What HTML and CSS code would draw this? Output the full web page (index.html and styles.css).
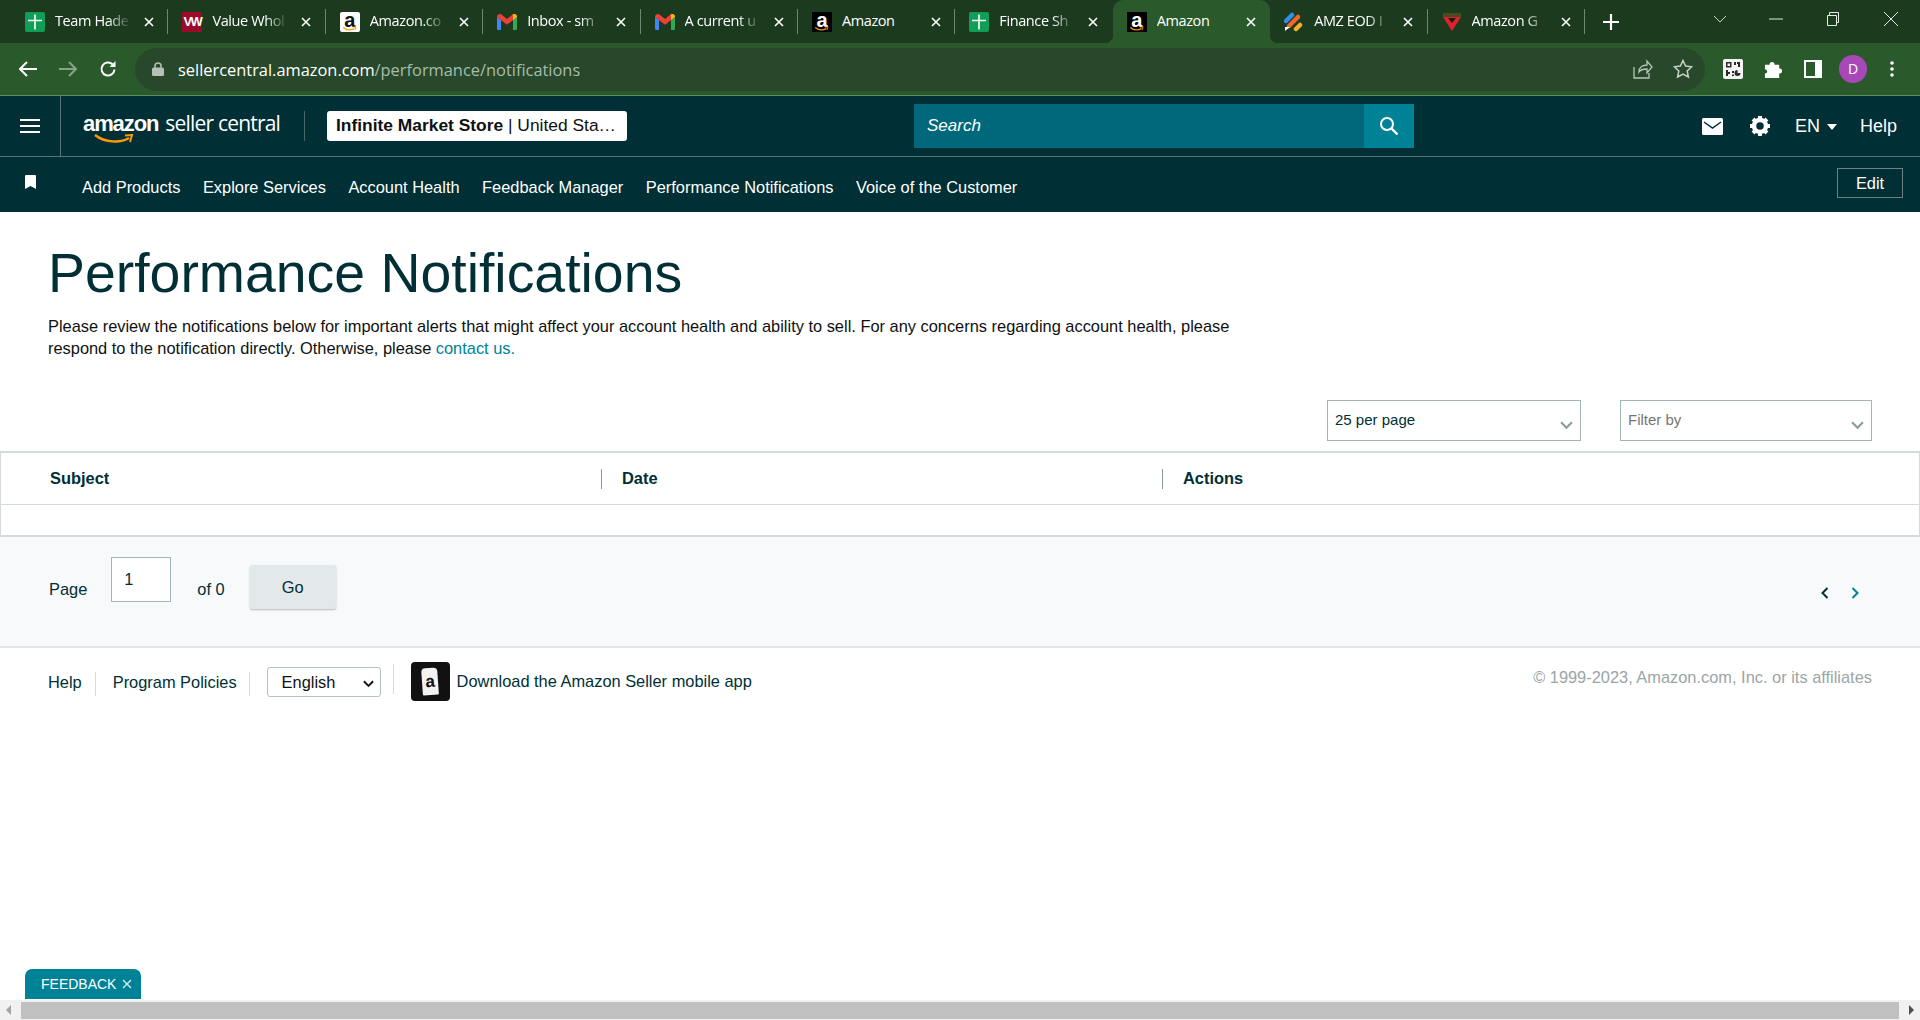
FILE: index.html
```html
<!DOCTYPE html>
<html lang="en">
<head>
    <meta charset="UTF-8">
    <title>Performance Notifications</title>
    <link rel="stylesheet" href="styles.css">
</head>
<body>
    <svg class="defs" width="0" height="0">
        <symbol id="fav-sheets" viewBox="0 0 20 20">
            <rect width="20" height="20" rx="2" fill="#0f9d58"/>
            <path d="M9.200 2.500h1.600v5.300H17v1.500h-6.200v8.200H9.200V9.300H3V7.800h6.200z" fill="#fff"/>
        </symbol>
        <symbol id="fav-gmail" viewBox="0 0 20 16">
            <path d="M0 3v11.500A1.500 1.500 0 0 0 1.500 16H4V6z" fill="#4285f4"/>
            <path d="M16 6v10h2.500A1.500 1.500 0 0 0 20 14.500V3z" fill="#34a853"/>
            <path d="M0 3l4 3 6 4.500L16 6l4-3C20 .5 17.500-.8 15.500.6L10 5 4.500.6C2.500-.8 0 .5 0 3z" fill="#ea4335"/>
            <path d="M16 6V1l-6 4.500L4 1v5l6 4.500z" fill="#ea4335"/>
            <path d="M16 1.400l0 4.600 4-3C20 .5 17.500-.8 15.500.6z" fill="#fbbc04"/>
        </symbol>
        <symbol id="close-x" viewBox="0 0 10 10">
            <path d="M1 1l8 8M9 1l-8 8" stroke="#fff" stroke-width="1.600" fill="none"/>
        </symbol>
        <symbol id="smile" viewBox="0 0 20 8">
            <path d="M1 2c4 3.500 10 4 15 1.500" stroke="#f90" stroke-width="1.600" fill="none"/>
            <path d="M14 1.500l4-.5-1 4" stroke="#f90" stroke-width="1.200" fill="none"/>
        </symbol>
    </svg>

    <div class="tabstrip">
        <div class="tab">
            <svg class="fav"><use href="#fav-sheets"/></svg>
            <span class="tab-title">Team Hade</span>
            <svg class="tab-close"><use href="#close-x"/></svg>
        </div>
        <div class="tab">
            <span class="fav fav-vw">VW</span>
            <span class="tab-title">Value Whol</span>
            <svg class="tab-close"><use href="#close-x"/></svg>
        </div>
        <div class="tab">
            <span class="fav fav-a fav-a-white">a<svg class="fav-smile"><use href="#smile"/></svg></span>
            <span class="tab-title">Amazon.co</span>
            <svg class="tab-close"><use href="#close-x"/></svg>
        </div>
        <div class="tab">
            <svg class="fav fav-m"><use href="#fav-gmail"/></svg>
            <span class="tab-title">Inbox - sm</span>
            <svg class="tab-close"><use href="#close-x"/></svg>
        </div>
        <div class="tab">
            <svg class="fav fav-m"><use href="#fav-gmail"/></svg>
            <span class="tab-title">A current u</span>
            <svg class="tab-close"><use href="#close-x"/></svg>
        </div>
        <div class="tab">
            <span class="fav fav-a">a<svg class="fav-smile"><use href="#smile"/></svg></span>
            <span class="tab-title tab-title-full">Amazon</span>
            <svg class="tab-close"><use href="#close-x"/></svg>
        </div>
        <div class="tab tab-before-active">
            <svg class="fav"><use href="#fav-sheets"/></svg>
            <span class="tab-title">Finance Sh</span>
            <svg class="tab-close"><use href="#close-x"/></svg>
        </div>
        <div class="tab tab-active">
            <span class="fav fav-a">a<svg class="fav-smile"><use href="#smile"/></svg></span>
            <span class="tab-title tab-title-full">Amazon</span>
            <svg class="tab-close"><use href="#close-x"/></svg>
        </div>
        <div class="tab">
            <svg class="fav" viewBox="0 0 20 20">
                <path d="M2 9l6-6" stroke="#2f8fef" stroke-width="4.500" stroke-linecap="round"/>
                <path d="M5 14l9-9" stroke="#f4672a" stroke-width="4.500" stroke-linecap="round"/>
                <path d="M12 17l4-4" stroke="#fbb02d" stroke-width="4.500" stroke-linecap="round"/>
                <path d="M1 15h5l-5 4z" fill="#fff"/>
            </svg>
            <span class="tab-title">AMZ EOD I</span>
            <svg class="tab-close"><use href="#close-x"/></svg>
        </div>
        <div class="tab">
            <svg class="fav" viewBox="0 0 20 20">
                <rect x="1" y="1" width="18" height="4" fill="#4a4a20"/>
                <path d="M1 5h18l-9 14z" fill="#e0202c"/>
                <path d="M6 6h8l-4 5z" fill="#1a1a1a"/>
            </svg>
            <span class="tab-title">Amazon G</span>
            <svg class="tab-close"><use href="#close-x"/></svg>
        </div>
        <svg class="new-tab" viewBox="0 0 16 16"><path d="M8 0v16M0 8h16" stroke="#fff" stroke-width="2.200"/></svg>
        <div class="window-btns">
            <svg class="win-chevron" viewBox="0 0 14 8"><path d="M1 1l6 6 6-6" stroke="#c9d4ca" fill="none"/></svg>
            <svg class="win-min" viewBox="0 0 14 2"><path d="M0 1h14" stroke="#e4ebe4"/></svg>
            <svg class="win-max" viewBox="0 0 14 16"><path d="M1.500 4.500h9v10h-9zM3.500 4.500v-3h9v10h-2" stroke="#e4ebe4" fill="none"/></svg>
            <svg class="win-close" viewBox="0 0 14 14"><path d="M0 0l14 14M14 0L0 14" stroke="#e4ebe4"/></svg>
        </div>
    </div>

    <div class="toolbar">
        <svg class="tool-icon" viewBox="0 0 18 16"><path d="M8 1L1 8l7 7M1 8h17" stroke="#fff" stroke-width="2" fill="none"/></svg>
        <svg class="tool-icon tool-off" viewBox="0 0 18 16"><path d="M10 1l7 7-7 7M17 8H0" stroke="#85a487" stroke-width="2" fill="none"/></svg>
        <svg class="tool-icon tool-reload" viewBox="0 0 18 18"><path d="M15.500 9.500a6.500 6.500 0 1 1-2-5.200" stroke="#fff" stroke-width="2" fill="none"/><path d="M16.500 1v6h-6z" fill="#fff"/></svg>
        <div class="omnibox">
            <svg class="lock" viewBox="0 0 12 14"><path d="M3 6V4a3 3 0 0 1 6 0v2" stroke="#b6c0b7" stroke-width="1.500" fill="none"/><rect y="5.500" width="12" height="8.500" rx="1.500" fill="#b6c0b7"/></svg>
            <span class="url"><span class="url-host">sellercentral.amazon.com</span>/performance/notifications</span>
            <svg class="omni-share" viewBox="0 0 20 20"><path d="M1 8v11h15v-5M6 13c0-5 4-7 8-7V2l5 6-5 6v-4c-3 0-6 0-8 3z" stroke="#b9c6ba" stroke-width="1.300" fill="none"/></svg>
            <svg class="omni-star" viewBox="0 0 20 20"><path d="M10 1.500l2.600 5.600 6 .7-4.400 4.200 1.200 6L10 15l-5.400 3 1.200-6L1.400 7.800l6-.7z" stroke="#c5d0c6" stroke-width="1.500" fill="none"/></svg>
        </div>
        <div class="ext-qr">
            <svg viewBox="0 0 20 20"><rect width="20" height="20" rx="2" fill="#f3f3f3"/><path d="M3 3h5.500v5.500H3zM4.500 4.500V7H7V4.500zM11 3h2v3h-2zM14 3h3v5h-2V5h-1zM3 11h2v2h2v2H5v2H3zM9 12h2v2H9zM9 15.500h2V17H9z" fill="#2a2a2a" fill-rule="evenodd"/><path d="M14.500 11a3 3 0 1 0 3 3h-3z" fill="#2a2a2a"/></svg>
        </div>
        <svg class="ext-puzzle" viewBox="0 0 20 20"><path d="M1 5h5c-1-4 6-4 5 0h5v4c4-1 4 6 0 5v5H1v-5c3 1 3-5 0-4z" fill="#fff"/></svg>
        <svg class="ext-panel" viewBox="0 0 18 18"><rect x="1" y="1" width="16" height="16" fill="none" stroke="#fff" stroke-width="2"/><rect x="11" y="1" width="6" height="16" fill="#fff"/></svg>
        <span class="avatar">D</span>
        <svg class="ext-dots" viewBox="0 0 4 16"><circle cx="2" cy="2" r="1.800" fill="#fff"/><circle cx="2" cy="8" r="1.800" fill="#fff"/><circle cx="2" cy="14" r="1.800" fill="#fff"/></svg>
    </div>

    <header class="top-bar">
        <div class="hamburger"><span></span><span></span><span></span></div>
        <div class="logo">
            <span class="logo-amazon">amazon<svg class="logo-smile" viewBox="0 0 40 10"><path d="M1 1c10 8 26 8 34 3" stroke="#f90" stroke-width="2.500" fill="none"/><path d="M31 1.500l7-.5-2 7" stroke="#f90" stroke-width="2" fill="none"/></svg></span>
            <span class="logo-seller">seller central</span>
        </div>
        <div class="store-picker"><strong>Infinite Market Store</strong> | United Sta…</div>
        <div class="search">
            <span class="search-input">Search</span>
            <span class="search-btn">
                <svg viewBox="0 0 20 20" width="20" height="20"><circle cx="8" cy="8" r="6" stroke="#fff" stroke-width="2" fill="none"/><path d="M12.500 12.500L18.500 18.500" stroke="#fff" stroke-width="2.400"/></svg>
            </span>
        </div>
        <div class="top-right">
            <svg class="icon-mail" viewBox="0 0 21 17"><rect width="21" height="17" rx="1.500" fill="#fff"/><path d="M2 4l8.500 6L19 4" stroke="#002f36" stroke-width="1.500" fill="none"/></svg>
            <svg class="icon-gear" viewBox="0 0 22 22"><circle cx="11" cy="11" r="6" fill="none" stroke="#fff" stroke-width="4.500"/><path d="M11 1v20M1 11h20M4 4l14 14M18 4L4 18" stroke="#fff" stroke-width="4" stroke-dasharray="4 12 4"/></svg>
            <span class="lang">EN<i class="caret"></i></span>
            <span class="top-help">Help</span>
        </div>
    </header>
    <nav class="shortcut-bar">
        <svg class="icon-bookmark" viewBox="0 0 11 14"><path d="M0 1a1 1 0 0 1 1-1h9a1 1 0 0 1 1 1v13l-5.500-3L0 14z" fill="#fff"/></svg>
        <div class="shortcuts">
            <a>Add Products</a>
            <a>Explore Services</a>
            <a>Account Health</a>
            <a>Feedback Manager</a>
            <a>Performance Notifications</a>
            <a>Voice of the Customer</a>
        </div>
        <button class="edit-btn">Edit</button>
    </nav>

    <main class="content">
        <div class="intro">
            <h1>Performance Notifications</h1>
            <p>Please review the notifications below for important alerts that might affect your account health and ability to sell. For any concerns regarding account health, please respond to the notification directly. Otherwise, please <a>contact us.</a></p>
        </div>

        <div class="filters">
            <div class="drop">25 per page<svg viewBox="0 0 12 8"><path d="M1 1l5 5 5-5" stroke="#8a9ea0" stroke-width="2" fill="none"/></svg></div>
            <div class="drop drop-filter">Filter by<svg viewBox="0 0 12 8"><path d="M1 1l5 5 5-5" stroke="#8a9ea0" stroke-width="2" fill="none"/></svg></div>
        </div>

        <div class="table">
            <div class="table-head">
                <div class="col col-subject">Subject</div>
                <div class="col col-date">Date</div>
                <div class="col col-actions">Actions</div>
            </div>
            <div class="table-empty"></div>
        </div>

        <div class="pager">
            <span class="pager-label">Page</span>
            <div class="pager-input">1</div>
            <span class="pager-of">of 0</span>
            <button class="go-btn">Go</button>
            <div class="pager-arrows">
                <svg viewBox="0 0 8 12"><path d="M6.500 1l-5 5 5 5" stroke="#002f36" stroke-width="2" fill="none"/></svg>
                <svg viewBox="0 0 8 12"><path d="M1.500 1l5 5-5 5" stroke="#008296" stroke-width="2" fill="none"/></svg>
            </div>
        </div>

        <footer class="page-footer">
            <a class="foot-help">Help</a>
            <a class="foot-policies">Program Policies</a>
            <div class="foot-lang">English<svg viewBox="0 0 12 8"><path d="M1 1l5 5 5-5" stroke="#111" stroke-width="2" fill="none"/></svg></div>
            <div class="foot-app">
                <span class="app-icon"><span class="app-tag">a</span></span>
                <span>Download the Amazon Seller mobile app</span>
            </div>
            <span class="copyright">© 1999-2023, Amazon.com, Inc. or its affiliates</span>
        </footer>
    </main>

    <div class="feedback">FEEDBACK <svg viewBox="0 0 10 10"><path d="M1 1l8 8M9 1l-8 8" stroke="#d5eef2" stroke-width="1.300"/></svg></div>

    <div class="scrollbar">
        <i class="arrow-left"></i>
        <div class="scroll-thumb"></div>
        <i class="arrow-right"></i>
    </div>
</body>
</html>
```

FILE: styles.css
```css
* {
    box-sizing: border-box;
}
body {
    margin: 0;
    height: 100vh;
    overflow: hidden;
    display: flex;
    flex-direction: column;
    font-family: "Liberation Sans", Arial, sans-serif;
    font-size: 16.4px;
    color: #002f36;
    background-color: #fff;
    position: relative;
}
.defs {
    position: absolute;
}

/* browser chrome */
.tabstrip {
    height: 43px;
    flex: none;
    display: flex;
    padding-left: 11px;
    background-color: #1b3a1e;
    color: #fff;
}
.tab {
    width: 157.4px;
    flex: none;
    height: 43px;
    display: flex;
    align-items: center;
    padding-left: 14px;
    position: relative;
}
.tab::after {
    content: "";
    position: absolute;
    right: 0;
    top: 9px;
    height: 25px;
    width: 1px;
    background-color: #6b8a6e;
}
.tab-before-active::after, .tab-active::after {
    display: none;
}
.tab-active {
    background-color: #2a5a2c;
    border-radius: 10px 10px 0 0;
}
.tab-active::before {
    content: "";
    position: absolute;
    left: -8px;
    bottom: 0;
    width: 8px;
    height: 8px;
    background: radial-gradient(circle at 0 0, #1b3a1e 8px, #2a5a2c 8.5px);
}
.tab-active + .tab::before {
    content: "";
    position: absolute;
    left: 0;
    bottom: 0;
    width: 8px;
    height: 8px;
    background: radial-gradient(circle at 100% 0, #1b3a1e 8px, #2a5a2c 8.5px);
}
.fav {
    width: 20px;
    height: 20px;
    flex: none;
}
.fav-m {
    height: 16px;
}
.fav-vw {
    background-color: #9a0b2b;
    font-family: "Liberation Sans", sans-serif;
    font-weight: bold;
    font-size: 13px;
    line-height: 20px;
    letter-spacing: -1.5px;
    text-align: center;
}
.fav-a {
    background-color: #000;
    color: #fff;
    font-size: 20px;
    font-weight: bold;
    line-height: 16px;
    text-align: center;
    position: relative;
}
.fav-a-white {
    background-color: #fff;
    color: #111;
    border-radius: 2px;
}
.fav-smile {
    position: absolute;
    left: 1px;
    bottom: 0;
    width: 18px;
    height: 6px;
}
.tab-title {
    margin: -2px 0 0 10px;
    width: 76px;
    flex: none;
    overflow: hidden;
    white-space: nowrap;
    font-family: "Open Sans", sans-serif;
    font-size: 14.5px;
    letter-spacing: -0.4px;
    -webkit-mask-image: linear-gradient(to right, #000 70%, transparent);
    mask-image: linear-gradient(to right, #000 70%, transparent);
}
.tab-title-full {
    -webkit-mask-image: none;
    mask-image: none;
}
.tab-close {
    width: 10px;
    height: 10px;
    margin-left: 13px;
    flex: none;
}
.new-tab {
    width: 16px;
    height: 16px;
    margin: 14px 0 0 18px;
}
.window-btns {
    flex: 1;
    display: flex;
    align-items: flex-start;
}
.win-chevron {
    width: 14px;
    height: 8px;
    margin: 15px 0 0 94px;
}
.win-min {
    width: 14px;
    height: 2px;
    margin: 18px 0 0 42px;
}
.win-max {
    width: 14px;
    height: 16px;
    margin: 11px 0 0 43px;
}
.win-close {
    width: 14px;
    height: 14px;
    margin: 12px 0 0 44px;
}
.toolbar {
    height: 53px;
    flex: none;
    display: flex;
    align-items: center;
    background-color: #2a5a2c;
    border-bottom: 1px solid #5f8a63;
    padding-left: 19px;
}
.tool-icon {
    width: 18px;
    height: 16px;
    margin-right: 22px;
    flex: none;
}
.tool-reload {
    height: 18px;
    margin-right: 18px;
}
.omnibox {
    width: 1570px;
    height: 43px;
    flex: none;
    display: flex;
    align-items: center;
    background-color: #27482b;
    border-radius: 22px;
    padding-left: 17px;
}
.lock {
    width: 12px;
    height: 14px;
}
.url {
    margin-left: 14px;
    color: #a9bcab;
    font-family: "Open Sans", sans-serif;
    font-size: 16.4px;
}
.url-host {
    color: #fff;
}
.omni-share {
    width: 20px;
    height: 20px;
    margin-left: auto;
}
.omni-star {
    width: 20px;
    height: 20px;
    margin: 0 12px 0 20px;
}
.ext-qr {
    width: 20px;
    height: 20px;
    margin-left: 18px;
}
.ext-qr svg {
    display: block;
}
.ext-puzzle {
    width: 19px;
    height: 19px;
    margin-left: 21px;
}
.ext-panel {
    width: 18px;
    height: 18px;
    margin-left: 21px;
}
.avatar {
    width: 28px;
    height: 28px;
    margin-left: 17px;
    border-radius: 50%;
    background-color: #a848b8;
    color: #fff;
    font-family: "Open Sans", sans-serif;
    font-size: 14px;
    line-height: 28px;
    text-align: center;
}
.ext-dots {
    width: 4px;
    height: 16px;
    margin-left: 23px;
}

/* seller central header */
.top-bar {
    height: 61px;
    flex: none;
    display: flex;
    align-items: center;
    background-color: #002f36;
    border-bottom: 1px solid #5b7278;
    color: #fff;
}
.hamburger {
    width: 61px;
    height: 60px;
    flex: none;
    border-right: 1px solid #5b7278;
    display: flex;
    flex-direction: column;
    justify-content: center;
    gap: 4px;
    padding-left: 20px;
}
.hamburger span {
    display: block;
    width: 20px;
    height: 2px;
    background-color: #fff;
}
.logo {
    width: 222px;
    height: 30px;
    flex: none;
    margin-left: 22px;
    display: flex;
    align-items: center;
    gap: 7px;
    border-right: 1px solid #4a666b;
    white-space: nowrap;
}
.logo-amazon {
    font-size: 22px;
    font-weight: bold;
    letter-spacing: -1.1px;
    position: relative;
    margin-top: -5px;
}
.logo-smile {
    position: absolute;
    left: 10px;
    bottom: -7px;
    width: 42px;
    height: 10px;
}
.logo-seller {
    font-family: "Open Sans", sans-serif;
    font-size: 21px;
    letter-spacing: -0.8px;
    margin-top: -7px;
}
.store-picker {
    width: 300px;
    height: 30px;
    flex: none;
    margin-left: 22px;
    padding-left: 9px;
    background-color: #fff;
    border-radius: 3px;
    color: #0f1111;
    font-size: 17.4px;
    line-height: 29px;
    white-space: nowrap;
}
.search {
    width: 500px;
    height: 44px;
    flex: none;
    margin-left: 287px;
    display: flex;
    background-color: #00687a;
}
.search-input {
    flex: 1;
    padding-left: 13px;
    line-height: 44px;
    font-style: italic;
    font-size: 17px;
}
.search-btn {
    width: 50px;
    background-color: #008296;
    display: flex;
    align-items: center;
    justify-content: center;
}
.top-right {
    flex: 1;
    display: flex;
    align-items: center;
    padding-left: 288px;
    font-size: 18px;
}
.icon-mail {
    width: 21px;
    height: 17px;
}
.icon-gear {
    width: 22px;
    height: 22px;
    margin-left: 26px;
}
.lang {
    margin-left: 24px;
    display: flex;
    align-items: center;
}
.caret {
    margin: 2px 0 0 7px;
    border-left: 5.5px solid transparent;
    border-right: 5.5px solid transparent;
    border-top: 6px solid #fff;
}
.top-help {
    margin-left: 23px;
}
.shortcut-bar {
    height: 55px;
    flex: none;
    display: flex;
    align-items: center;
    background-color: #002f36;
    color: #fff;
    padding: 0 17px 0 25px;
}
.icon-bookmark {
    width: 11px;
    height: 14px;
    margin-top: -5px;
    flex: none;
}
.shortcuts {
    display: flex;
    gap: 22.5px;
    margin: 5px 0 0 46px;
}
.edit-btn {
    margin: -3px 0 0 auto;
    width: 66px;
    height: 30px;
    background: transparent;
    border: 1px solid #6b8186;
    color: #fff;
    font-family: inherit;
    font-size: 16.4px;
    padding: 0;
}

/* page body */
.content {
    flex: 1;
    display: flex;
    flex-direction: column;
}
.intro {
    padding: 30px 0 0 48px;
    width: 1290px;
}
.intro h1 {
    margin: 0;
    font-size: 55.4px;
    font-weight: normal;
    line-height: 62px;
}
.intro p {
    margin: 11px 0 0;
    font-size: 16.4px;
    line-height: 22px;
    color: #0f1111;
}
.intro a {
    color: #008296;
}
.filters {
    display: flex;
    justify-content: flex-end;
    gap: 39px;
    padding-right: 48px;
    margin-top: 41px;
}
.drop {
    width: 254px;
    height: 41px;
    border: 1px solid #a2b5b5;
    padding: 10px 7px;
    font-size: 15px;
    position: relative;
    display: flex;
    justify-content: space-between;
}
.drop svg {
    width: 13px;
    height: 9px;
    margin-top: 10px;
}
.drop-filter {
    width: 252px;
    color: #767676;
}
.table {
    margin-top: 10px;
    border: 1px solid #d5dbdb;
    border-bottom-width: 2px;
    border-top-width: 2px;
    height: 86px;
}
.table-head {
    height: 52px;
    display: flex;
    align-items: center;
    border-bottom: 1px solid #d5dbdb;
    font-weight: bold;
}
.col {
    height: 20px;
    line-height: 19px;
}
.col-subject {
    width: 601px;
    padding-left: 49px;
    border-right: 1px solid #8c9a9c;
}
.col-date {
    width: 561px;
    padding-left: 20px;
    border-right: 1px solid #8c9a9c;
}
.col-actions {
    padding-left: 20px;
}
.pager {
    height: 111px;
    flex: none;
    display: flex;
    align-items: flex-start;
    background-color: #f8f9fb;
    border-bottom: 2px solid #e3e6e8;
    padding: 20px 48px 0 49px;
}
.pager-label {
    margin-top: 23px;
}
.pager-input {
    width: 60px;
    height: 45px;
    margin-left: 24px;
    border: 1px solid #a2b5b5;
    background-color: #fff;
    padding: 12px 0 0 12px;
}
.pager-of {
    margin: 23px 0 0 26px;
}
.go-btn {
    width: 86px;
    height: 44px;
    margin: 8px 0 0 25px;
    background-color: #e3e9ea;
    border: none;
    border-radius: 2px;
    box-shadow: 0 1px 2px rgba(0, 0, 0, 0.25);
    color: #002f36;
    font-family: inherit;
    font-size: 16.4px;
}
.pager-arrows {
    margin: 30px 0 0 auto;
    display: flex;
    gap: 22px;
    padding-right: 13px;
}
.pager-arrows svg {
    width: 8px;
    height: 12px;
}
.page-footer {
    display: flex;
    align-items: flex-start;
    padding: 14px 48px 0;
    height: 60px;
    color: #002f36;
}
.foot-help {
    margin-top: 10px;
    padding-right: 13px;
    border-right: 1px solid #d5dbdb;
    height: 24px;
    line-height: 20px;
}
.foot-policies {
    margin: 10px 0 0 17px;
    padding-right: 12px;
    border-right: 1px solid #d5dbdb;
    height: 24px;
    line-height: 20px;
}
.foot-lang {
    width: 114px;
    height: 30px;
    margin: 5px 0 0 17px;
    border: 1px solid #b5c0c0;
    border-radius: 3px;
    padding: 5px 0 0 14px;
    color: #0f1111;
    display: flex;
    justify-content: space-between;
}
.foot-lang svg {
    width: 11px;
    height: 8px;
    margin: 7px 6px 0 0;
}
.foot-app {
    display: flex;
    align-items: center;
    gap: 7px;
    margin-left: 12px;
    padding-left: 18px;
    height: 39px;
    position: relative;
}
.foot-app::before {
    content: "";
    position: absolute;
    left: 0;
    top: 2px;
    height: 30px;
    width: 1px;
    background-color: #d5dbdb;
}
.app-icon {
    width: 39px;
    height: 39px;
    background-color: #111;
    border-radius: 4px;
    display: flex;
    align-items: center;
    justify-content: center;
}
.app-tag {
    width: 16px;
    height: 27px;
    background-color: #f2f2f2;
    color: #111;
    font-weight: bold;
    font-size: 17px;
    line-height: 28px;
    text-align: center;
    border-radius: 4px 4px 1px 1px;
    transform: rotate(-4deg);
}
.copyright {
    margin: 6px 0 0 auto;
    color: #9aa5a6;
}

/* bits that sit over the page */
.feedback {
    position: absolute;
    left: 25px;
    bottom: 21px;
    width: 116px;
    height: 30px;
    background-color: #008296;
    border-radius: 7px 7px 0 0;
    color: #fff;
    font-size: 14px;
    line-height: 30px;
    padding-left: 16px;
    white-space: nowrap;
}
.feedback svg {
    width: 10px;
    height: 10px;
    margin-left: 2px;
}
.scrollbar {
    height: 20px;
    flex: none;
    display: flex;
    align-items: center;
    background-color: #f1f1f1;
    padding: 0 6px;
}
.scroll-thumb {
    flex: 1;
    height: 17px;
    margin: 0 10px;
    background-color: #c1c1c1;
}
.arrow-left {
    border-top: 5px solid transparent;
    border-bottom: 5px solid transparent;
    border-right: 5px solid #a3a3a3;
}
.arrow-right {
    border-top: 5px solid transparent;
    border-bottom: 5px solid transparent;
    border-left: 5px solid #505050;
}
```
